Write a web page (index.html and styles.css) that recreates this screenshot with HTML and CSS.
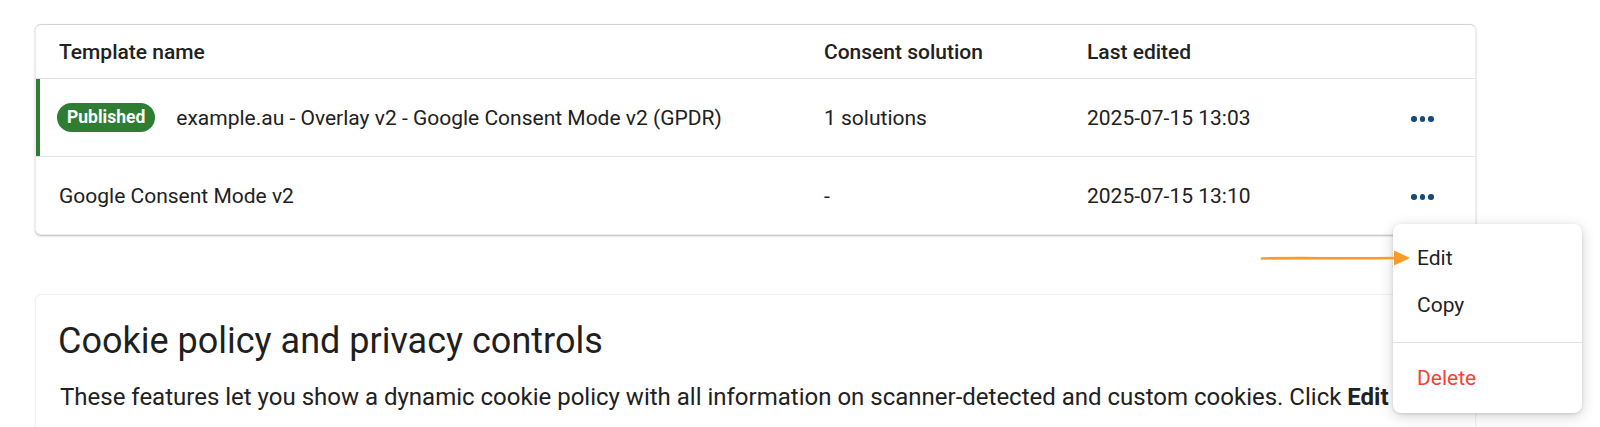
FILE: index.html
```html
<!DOCTYPE html>
<html>
<head>
<meta charset="utf-8">
<link rel="stylesheet" href="styles.css">
</head>
<body>
<div class="page">
  <div class="table-card">
    <div class="row head">
      <div class="cell">Template name</div>
      <div class="cell">Consent solution</div>
      <div class="cell">Last edited</div>
      <div class="cell"></div>
    </div>
    <div class="row published">
      <div class="cell name"><span class="badge">Published</span><span>example.au - Overlay v2 - Google Consent Mode v2 (GPDR)</span></div>
      <div class="cell">1 solutions</div>
      <div class="cell">2025-07-15 13:03</div>
      <div class="cell actions"><span class="dots"><i></i><i></i><i></i></span></div>
    </div>
    <div class="row">
      <div class="cell">Google Consent Mode v2</div>
      <div class="cell">-</div>
      <div class="cell">2025-07-15 13:10</div>
      <div class="cell actions"><span class="dots"><i></i><i></i><i></i></span></div>
    </div>
  </div>

  <div class="info-card">
    <h2 class="title">Cookie policy and privacy controls</h2>
    <p class="text">These features let you show a dynamic cookie policy with all information on scanner-detected and custom cookies. Click <b>Edit</b> to configure them.</p>
  </div>
</div>

<div class="menu">
  <div class="item">Edit</div>
  <div class="item">Copy</div>
  <div class="sep"></div>
  <div class="item danger">Delete</div>
</div>

<svg class="arrow" width="152" height="20" viewBox="0 0 152 20">
  <path d="M2 10.5 C 40 9.6, 80 10.8, 136 10" stroke="#fb9a26" stroke-width="2.6" fill="none" stroke-linecap="round"/>
  <path d="M134 2.5 L150 10 L134 17.5 Z" fill="#fb9a26"/>
</svg>
</body>
</html>
```

FILE: styles.css
```css
* { box-sizing: border-box; }
html, body { margin: 0; padding: 0; background: #ffffff; }
body {
  font-family: Roboto, "Liberation Sans", Arial, sans-serif;
  color: #212121;
  width: 1600px;
  height: 427px;
  overflow: hidden;
  position: relative;
}
.page {
  padding: 24px 0 0 35px;
  width: 1476px;
}
.table-card {
  background: #fff;
  border-radius: 6px;
  border: 1px solid #ececec;
  border-top-color: #d2d2d2;
  box-shadow: 0 1px 2px rgba(0,0,0,0.28);
  overflow: hidden;
}
.row {
  display: grid;
  grid-template-columns: 765px 263px 1fr 96px;
  height: 78px;
  align-items: center;
  border-top: 1px solid #e2e2e2;
  font-size: 21px;
}
.row.head {
  height: 53px;
  border-top: none;
  font-weight: 500;
}
.cell {
  padding-left: 23px;
  white-space: nowrap;
}
.row.published {
  box-shadow: inset 4px 0 0 #2e7d32;
}
.name {
  display: flex;
  align-items: center;
  padding-left: 21px;
}
.badge {
  display: inline-block;
  background: #2e7d32;
  color: #fff;
  font-size: 17.5px;
  font-weight: 700;
  height: 29px;
  line-height: 29px;
  padding: 0 10px;
  border-radius: 15px;
  margin-right: 21px;
}
.actions { padding-left: 32px; }
.dots { display: inline-flex; gap: 3px; vertical-align: middle; }
.dots i {
  display: block;
  width: 5.5px;
  height: 5.5px;
  border-radius: 50%;
  background: #174a78;
}
.info-card {
  margin-top: 59px;
  background: #fff;
  border: 1px solid #f0f0f0;
  border-radius: 6px 6px 0 0;
  box-shadow: 0 0 2px rgba(0,0,0,0.06);
  padding: 24px 24px 40px 22px;
  height: 200px;
  overflow: hidden;
}
.title {
  margin: 0;
  font-size: 36px;
  font-weight: 400;
  line-height: 44px;
  color: #1f1f1f;
}
.text {
  margin: 19px 0 0;
  padding-left: 2px;
  font-size: 24px;
  line-height: 30px;
  white-space: nowrap;
  color: #212121;
}
.text b { font-weight: 700; }
.arrow {
  position: absolute;
  left: 1260px;
  top: 248px;
}
.menu {
  position: absolute;
  left: 1393px;
  top: 224px;
  width: 189px;
  height: 189px;
  background: #fff;
  border-radius: 8px;
  box-shadow: 0 3px 14px rgba(0,0,0,0.18), 0 1px 3px rgba(0,0,0,0.12);
  padding: 11px 0;
}
.item {
  height: 47px;
  line-height: 47px;
  padding-left: 24px;
  font-size: 21px;
  color: #1f1f1f;
}
.item.danger { color: #f44336; }
.sep {
  height: 1px;
  background: #e0e0e0;
  margin: 13px 0 12px;
}
```
